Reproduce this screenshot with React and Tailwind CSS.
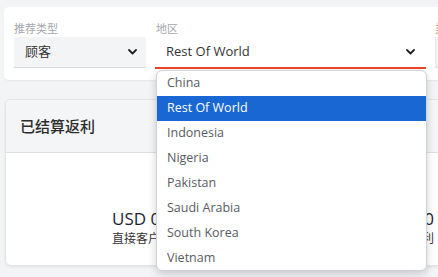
import React from "react";

const font = { fontFamily: '"Open Sans", "Noto Sans CJK SC", sans-serif' };

function Chevron({ className }) {
  return (
    <svg className={className} width="9" height="6" viewBox="0 0 9 6" fill="none">
      <path d="M1 1l3.5 3.5L8 1" stroke="#222" strokeWidth="1.8" strokeLinecap="round" strokeLinejoin="round" />
    </svg>
  );
}

const items = ["China", "Rest Of World", "Indonesia", "Nigeria", "Pakistan", "Saudi Arabia", "South Korea", "Vietnam"];

export default function App() {
  return (
    <div className="relative w-[438px] h-[277px] overflow-hidden bg-[#f3f4f6]" style={font}>
      <div className="pl-[4px] pt-[7px] flex flex-col gap-[19px]">
        {/* filter card */}
        <div className="w-[700px] h-[73px] bg-white rounded-[5px] shadow-[0_1px_2px_rgba(0,0,0,0.06)] flex gap-[9px] pl-[10px] pt-[14px]">
          <div className="flex flex-col w-[132px]">
            <div className="text-[11px] leading-[16px] text-[#a3a6ad] h-[16px]">推荐类型</div>
            <div className="h-[31px] bg-[#f3f4f6] border-b border-[#d6d8dc] flex items-center justify-between pl-[11px] pr-[9px]">
              <span className="text-[13px] text-[#333]">顾客</span>
              <Chevron />
            </div>
          </div>
          <div className="flex flex-col w-[271px]">
            <div className="text-[11px] leading-[16px] text-[#a3a6ad] h-[16px] pl-[1px]">地区</div>
            <div className="h-[32px] bg-white border-b-2 border-b-[#ef4526] flex items-center justify-between pl-[11px] pr-[11px]">
              <span className="text-[13px] text-[#333]">Rest Of World</span>
              <Chevron />
            </div>
          </div>
          <div className="flex flex-col w-[132px]">
            <div className="text-[11px] leading-[16px] text-[#c9a46a] h-[16px]">类</div>
            <div className="h-[31px] bg-[#f3f4f6] border-b border-[#d6d8dc] border-l border-l-[#e5e7eb]"></div>
          </div>
        </div>

        {/* rebate card */}
        <div className="w-[700px] h-[167px] ml-[1px] bg-white rounded-[6px] border border-[#e3e5e8] shadow-[0_1px_3px_rgba(0,0,0,0.08)] overflow-hidden flex flex-col">
          <div className="h-[53px] bg-[#f4f5f7] border-b border-[#dcdee2] flex items-center pl-[14px]">
            <span className="text-[15px] font-medium text-[#2d2d2d]">已结算返利</span>
          </div>
          <div className="flex pl-[106px] pt-[55px]">
            <div className="w-[250px] flex flex-col">
              <span className="text-[17px] leading-[22px] text-[#1f2430]">USD 0.00</span>
              <span className="text-[12px] leading-[17px] text-[#333]">直接客户返利</span>
            </div>
            <div className="w-[250px] flex flex-col">
              <span className="text-[17px] leading-[22px] text-[#1f2430]">USD 0.00</span>
              <span className="text-[12px] leading-[17px] text-[#333]">间接客户返利</span>
            </div>
          </div>
        </div>
      </div>

      {/* dropdown */}
      <div className="absolute left-[156px] top-[70px] w-[271px] h-[201px] bg-white border border-[#cfd2d6] rounded-[6px] shadow-[0_3px_8px_rgba(0,0,0,0.18)] overflow-hidden">
        {items.map((it) => (
          <div
            key={it}
            className={
              it === "Rest Of World"
                ? "h-[25px] flex items-center pl-[10px] text-[12.5px] bg-[#1967d2] text-white"
                : "h-[25px] flex items-center pl-[10px] text-[12.5px] text-[#575b61]"
            }
          >
            {it}
          </div>
        ))}
      </div>
    </div>
  );
}
